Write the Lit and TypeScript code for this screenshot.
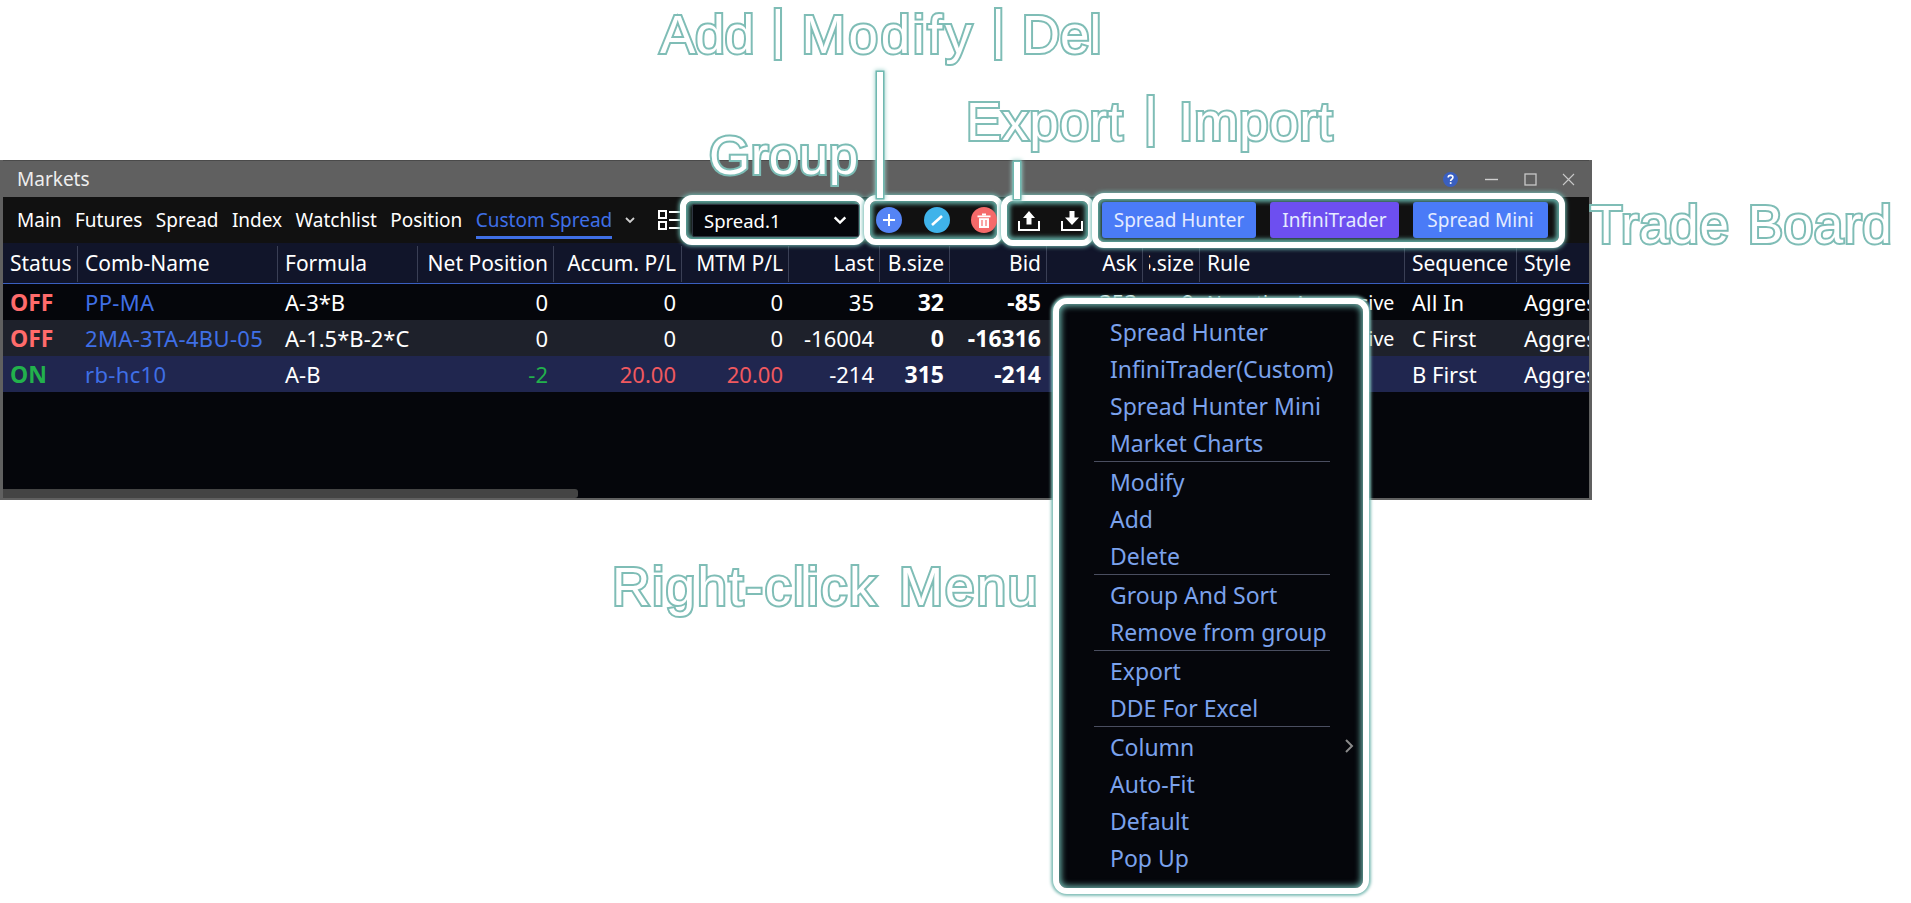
import { LitElement, html, css, nothing } from "lit";
import { customElement } from "lit/decorators.js";

type Cell = { t?: string; c?: string };

const HEAD: [string, string][] = [
  ["Status", ""], ["Comb-Name", ""], ["Formula", ""], ["Net Position", "r"], ["Accum. P/L", "r"],
  ["MTM P/L", "r"], ["Last", "r"], ["B.size", "r"], ["Bid", "r"], ["Ask", "r"], ["S.size", "r"],
  ["Rule", ""], ["Sequence", ""], ["Style", ""],
];

const ROWS: { cls: string; cells: Cell[] }[] = [
  {
    cls: "",
    cells: [
      { t: "OFF", c: "off b" }, { t: "PP-MA", c: "sym" }, { t: "A-3*B" }, { t: "0", c: "r" }, { t: "0", c: "r" },
      { t: "0", c: "r" }, { t: "35", c: "r" }, { t: "32", c: "r b" }, { t: "-85", c: "r b" }, { t: "353", c: "r" },
      { t: "9", c: "r" }, { t: "Negative Aggressive", c: "rule" }, { t: "All In" }, { t: "Aggressive" },
    ],
  },
  {
    cls: "alt",
    cells: [
      { t: "OFF", c: "off b" }, { t: "2MA-3TA-4BU-05", c: "sym" }, { t: "A-1.5*B-2*C" }, { t: "0", c: "r" }, { t: "0", c: "r" },
      { t: "0", c: "r" }, { t: "-16004", c: "r" }, { t: "0", c: "r b" }, { t: "-16316", c: "r b" }, { t: "", c: "r" },
      { t: "", c: "r" }, { t: "Negative Aggressive", c: "rule" }, { t: "C First" }, { t: "Aggressive" },
    ],
  },
  {
    cls: "sel",
    cells: [
      { t: "ON", c: "on b" }, { t: "rb-hc10", c: "sym" }, { t: "A-B" }, { t: "-2", c: "r on" }, { t: "20.00", c: "r red" },
      { t: "20.00", c: "r red" }, { t: "-214", c: "r" }, { t: "315", c: "r b" }, { t: "-214", c: "r b" }, { t: "", c: "r" },
      { t: "", c: "r" }, { t: "" }, { t: "B First" }, { t: "Aggressive" },
    ],
  },
];

const MENU: string[][] = [
  ["Spread Hunter", "InfiniTrader(Custom)", "Spread Hunter Mini", "Market Charts"],
  ["Modify", "Add", "Delete"],
  ["Group And Sort", "Remove from group"],
  ["Export", "DDE For Excel"],
  ["Column", "Auto-Fit", "Default", "Pop Up"],
];

const TABS = ["Main", "Futures", "Spread", "Index", "Watchlist", "Position"];

@customElement("app-root")
export class AppRoot extends LitElement {
  static styles = css`
    :host {
      display: block;
      position: relative;
      width: 1911px;
      height: 903px;
      overflow: hidden;
      background: #fff;
      font-family: "Noto Sans", "Open Sans", sans-serif;
      font-size: 19px;
      color: #fff;
    }
    .page { padding-top: 160px; }
    .win {
      width: 1592px;
      height: 340px;
      box-sizing: border-box;
      background: #05060b;
      border: 3px solid #606060;
      border-top: none;
      border-bottom-width: 2px;
      display: flex;
      flex-direction: column;
    }
    .title {
      height: 37px;
      flex: none;
      background: #606060;
      border-top: 1px solid #4a4a4a;
      box-sizing: border-box;
      display: flex;
      align-items: center;
      padding: 0 14px;
      color: #eee;
    }
    .title .ttl { margin-right: auto; }
    .wbtn { display: block; flex: none; }
    .help { margin-right: 27px; }
    .min { margin-right: 26px; }
    .max { margin-right: 25px; }
    .bar {
      height: 46px;
      flex: none;
      background: #111;
      display: flex;
      align-items: center;
      position: relative;
      z-index: 2;
    }
    .tabs {
      width: 677px;
      flex: none;
      box-sizing: border-box;
      padding-left: 14px;
      display: flex;
      align-items: center;
      gap: 13.4px;
      height: 100%;
    }
    .tab { white-space: nowrap; height: 100%; display: flex; align-items: center; box-sizing: border-box; }
    .tab.on {
      color: #3f6fe6;
      position: relative;
    }
    .tab.on::after {
      content: "";
      position: absolute;
      left: 0;
      right: 0;
      bottom: 4px;
      height: 3px;
      background: #3f6fe6;
    }
    .tabchev { margin-left: -2px; flex: none; }
    .listic { margin-left: auto; margin-right: -2px; flex: none; }
    .ring {
      box-sizing: border-box;
      border: 6px solid #fff;
      border-radius: 12px;
      background: #111;
      box-shadow: 0 0 4px 1px #6fb8b0, inset 0 0 4px 3px #5fa8a0;
      display: flex;
      align-items: center;
      flex: none;
      position: relative;
    }
    .r1 { width: 186px; height: 50px; padding-left: 6px; }
    .r2 { width: 139px; height: 50px; margin-left: -2px; padding-left: 6px; }
    .r3 { width: 93px; height: 51px; margin-left: -2px; padding-left: 11px; margin-top: 1px; }
    .r4 { width: 473px; height: 55px; margin-left: -2px; padding-left: 4px; gap: 14px; z-index: 1; }
    .select {
      width: 167px;
      height: 33px;
      box-sizing: border-box;
      background: #05060b;
      border: 1px solid #2e3440;
      border-radius: 2px;
      display: flex;
      align-items: center;
      justify-content: space-between;
      padding: 0 10px 0 11px;
      font-size: 18.5px;
    }
    .round {
      width: 26px;
      height: 26px;
      border-radius: 50%;
      display: flex;
      align-items: center;
      justify-content: center;
      flex: none;
    }
    .plus { background: #5584f5; }
    .pen { background: #3fb3ea; margin-left: 22px; }
    .trash { background: #f56a6a; margin-left: 21px; }
    .io { display: block; flex: none; }
    .io + .io { margin-left: 21px; }
    .tb {
      height: 36px;
      border-radius: 3px;
      display: flex;
      align-items: center;
      justify-content: center;
      color: #e4ebff;
      flex: none;
    }
    .tb.a { background: #4a7bf7; }
    .tb.b { background: #6d4ff0; }
    .w154 { width: 154px; }
    .w129 { width: 129px; }
    .w135 { width: 135px; }
    .grid {
      display: grid;
      grid-template-columns: 75px 200px 140px 136px 128px 107px 91px 70px 97px 96px 57px 205px 112px 72px;
    }
    .head {
      height: 40px;
      flex: none;
      background: #11152a;
      border-bottom: 1px solid #3a5fc0;
      font-size: 21px;
    }
    .hc {
      padding: 0 6px 0 7px;
      display: flex;
      align-items: center;
      position: relative;
      white-space: nowrap;
      overflow: hidden;
    }
    .hc.r { justify-content: flex-end; }
    .hc::after {
      content: "";
      position: absolute;
      right: 0;
      top: 3px;
      bottom: 1px;
      width: 1px;
      background: #3a3f55;
    }
    .hc:last-child::after { display: none; }
    .clip {
      display: flex;
      justify-content: flex-end;
      overflow: hidden;
      width: 45px;
      flex: none;
    }
    .row { height: 36px; font-size: 22px; flex: none; }
    .row.alt { background: #1e212b; }
    .row.sel { background: #20264f; }
    .c {
      padding: 0 6px 0 7px;
      display: flex;
      align-items: center;
      white-space: nowrap;
      overflow: hidden;
    }
    .c:last-child { padding-right: 0; }
    .c.r { justify-content: flex-end; }
    .c.b { font-weight: 700; font-size: 23px; }
    .c.rule { font-size: 19.6px; }
    .off { color: #ff6b6b; }
    .on { color: #22b14c; }
    .red { color: #f0595f; }
    .sym { color: #3f6fe6; letter-spacing: 0.35px; }
    .body { flex: 1; position: relative; min-height: 0; }
    .sb {
      position: absolute;
      left: 0;
      bottom: 0;
      width: 575px;
      height: 9px;
      background: #444;
      border-radius: 0 3px 3px 0;
    }
    .menu {
      position: absolute;
      left: 1053px;
      top: 298px;
      width: 316px;
      height: 596px;
      box-sizing: border-box;
      border: 6px solid #fff;
      border-radius: 14px;
      background: #05060b;
      box-shadow: 0 0 3px 2px #7fbdb6, inset 0 0 6px 2px #6fb8b0;
      padding: 9px 0 0 51px;
      color: #7ba2ec;
      font-size: 23px;
      z-index: 3;
    }
    .mi {
      height: 37px;
      display: flex;
      align-items: center;
      position: relative;
      white-space: nowrap;
    }
    .sep {
      height: 1px;
      width: 236px;
      margin-left: -16px;
      margin-bottom: 1px;
      background: #4a4e60;
    }
    .mchev { position: absolute; left: 234px; top: 11px; }
    .lab {
      position: absolute;
      font-family: "Liberation Sans", Arial, sans-serif;
      font-size: 53px;
      line-height: 53px;
      color: #fff;
      -webkit-text-stroke: 4px #7fbdb6;
      paint-order: stroke fill;
      white-space: nowrap;
      word-spacing: 5px;
      z-index: 5;
    }
    .lab .pipe { vertical-align: 5px; }
    .lab .wide { letter-spacing: 2.8px; }
    .l-add { left: 660px; top: 3px; word-spacing: 2px; }
    .l-exp { left: 966px; top: 90px; letter-spacing: 0.7px; }
    .l-grp { left: 709px; top: 129px; letter-spacing: 0.5px; text-shadow: 0 0 3px #6fb8b0; }
    .l-trd { left: 1590px; top: 198px; letter-spacing: 0.6px; word-spacing: 3px; }
    .l-rcm { left: 612px; top: 560px; letter-spacing: 1.9px; }
    .vline {
      position: absolute;
      box-sizing: border-box;
      background: #fff;
      box-shadow: 0 0 0 1.5px #6fb8b0, 0 0 4px 2px #9fd2cc;
      z-index: 4;
    }
    .v1 { left: 877px; top: 72px; width: 6px; height: 126px; }
    .v2 { left: 1014px; top: 162px; width: 6px; height: 37px; }
    .chev { display: block; }
  `;

  private chev(size: number, color: string) {
    return html`<svg class="chev" width=${size} height=${size} viewBox="0 0 12 12" fill="none" stroke=${color} stroke-width="1.8"><path d="M2 4l4 4 4-4"/></svg>`;
  }

  render() {
    return html`
      <div class="page">
        <div class="win">
          <div class="title">
            <span class="ttl">Markets</span>
            <svg class="wbtn help" width="15" height="15" viewBox="0 0 15 15"><circle cx="7.5" cy="7.5" r="7.5" fill="#3a5fc0"/><path d="M5.2 5.6c0-1.4 1-2.2 2.4-2.2s2.3.9 2.3 2c0 1.9-2.3 1.8-2.3 3.6" fill="none" stroke="#fff" stroke-width="1.6"/><rect x="6.8" y="10.2" width="1.7" height="1.7" fill="#fff"/></svg>
            <svg class="wbtn min" width="13" height="13" viewBox="0 0 13 13"><path d="M0 6.5h13" stroke="#d0d0d0" stroke-width="1.4"/></svg>
            <svg class="wbtn max" width="13" height="13" viewBox="0 0 13 13"><rect x="1" y="1" width="11" height="11" fill="none" stroke="#c8c8c8" stroke-width="1.3"/></svg>
            <svg class="wbtn" width="13" height="13" viewBox="0 0 13 13"><path d="M1 1l11 11M12 1L1 12" stroke="#c8c8c8" stroke-width="1.1"/></svg>
          </div>
          <div class="bar">
            <div class="tabs">
              ${TABS.map((t) => html`<span class="tab">${t}</span>`)}
              <span class="tab on">Custom Spread</span>
              <span class="tabchev">${this.chev(12, "#cfcfcf")}</span>
              <svg class="listic" width="24" height="20" viewBox="0 0 24 20" fill="none" stroke="#fff" stroke-width="2">
                <rect x="1" y="1" width="7" height="7"/><rect x="1" y="12" width="7" height="7"/>
                <path d="M11 2h13M11 10h13M11 18h13"/>
              </svg>
            </div>
            <div class="ring r1">
              <div class="select"><span>Spread.1</span>${this.chev(16, "#fff")}</div>
            </div>
            <div class="ring r2">
              <span class="round plus"><svg width="14" height="14" viewBox="0 0 14 14"><path d="M7 1v12M1 7h12" stroke="#fff" stroke-width="2"/></svg></span>
              <span class="round pen"><svg width="14" height="14" viewBox="0 0 14 14"><path d="M2 12L12 3" stroke="#fff" stroke-width="2.6"/></svg></span>
              <span class="round trash"><svg width="14" height="15" viewBox="0 0 14 15" fill="#fff"><rect x="0.5" y="2.5" width="13" height="1.8"/><rect x="5" y="0.5" width="4" height="2"/><path d="M2 5.2h10V15H2z"/><path d="M5 7v6M9 7v6" stroke="#f56a6a" stroke-width="1.2"/></svg></span>
            </div>
            <div class="ring r3">
              <svg class="io" width="22" height="20" viewBox="0 0 22 20"><path d="M1 10v9h20v-9" fill="none" stroke="#fff" stroke-width="2"/><path d="M11 0l6 7h-3.5v6.5h-5V7H5z" fill="#fff"/></svg>
              <svg class="io" width="22" height="20" viewBox="0 0 22 20"><path d="M1 10v9h20v-9" fill="none" stroke="#fff" stroke-width="2"/><path d="M8.5 0h5v6.5H18L11 14 4 6.5h4.5z" fill="#fff"/></svg>
            </div>
            <div class="ring r4">
              <div class="tb a w154">Spread Hunter</div>
              <div class="tb b w129">InfiniTrader</div>
              <div class="tb a w135">Spread Mini</div>
            </div>
          </div>
          <div class="grid head">
            ${HEAD.map(([t, c]) =>
              html`<div class="hc ${c}">${t === "S.size" ? html`<span class="clip"><span>${t}</span></span>` : t}</div>`
            )}
          </div>
          ${ROWS.map(
            (r) => html`<div class="grid row ${r.cls}">
              ${r.cells.map((c) => html`<div class="c ${c.c ?? ""}">${c.t ?? nothing}</div>`)}
            </div>`
          )}
          <div class="body"><div class="sb"></div></div>
        </div>
      </div>
      <div class="menu">
        ${MENU.map(
          (g, i) => html`
            ${g.map(
              (m) => html`<div class="mi">${m}${m === "Column"
                ? html`<svg class="mchev" width="10" height="14" viewBox="0 0 10 14" fill="none" stroke="#8a8a8a" stroke-width="2"><path d="M2 1l6 6-6 6"/></svg>`
                : nothing}</div>`
            )}
            ${i < MENU.length - 1 ? html`<div class="sep"></div>` : nothing}
          `
        )}
      </div>
      <div class="lab l-add">Add <span class="pipe">|</span> <span class="wide">Modify</span> <span class="pipe">|</span> Del</div>
      <div class="lab l-exp">Export <span class="pipe">|</span> Import</div>
      <div class="lab l-grp">Group</div>
      <div class="lab l-trd">Trade Board</div>
      <div class="lab l-rcm">Right-click Menu</div>
      <div class="vline v1"></div>
      <div class="vline v2"></div>
    `;
  }
}
